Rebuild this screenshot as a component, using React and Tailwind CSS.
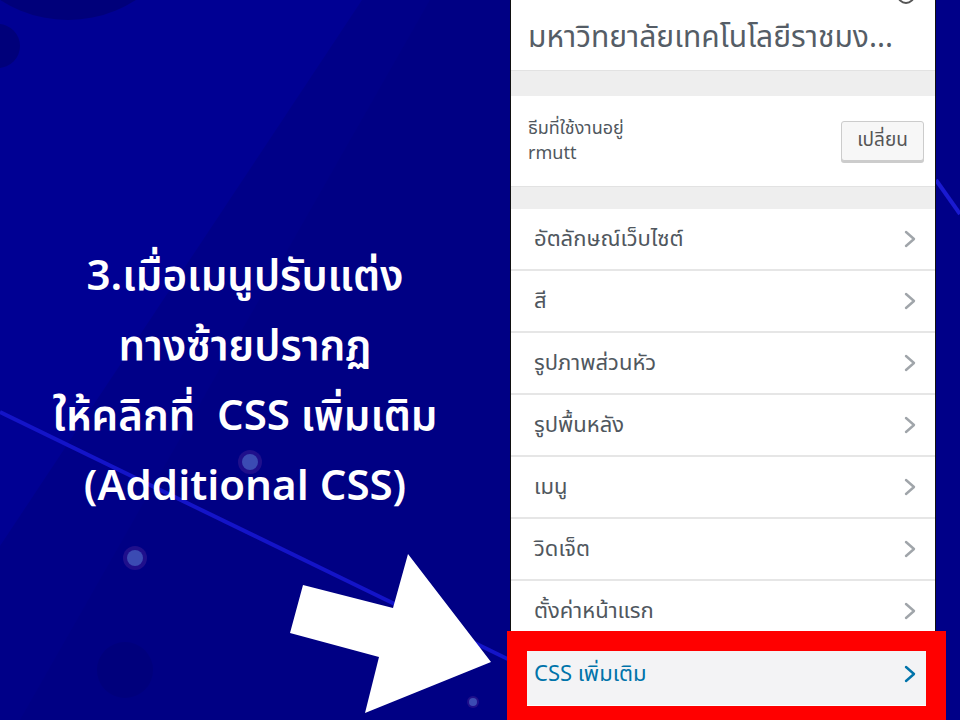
const rows = [
  'อัตลักษณ์เว็บไซต์',
  'สี',
  'รูปภาพส่วนหัว',
  'รูปพื้นหลัง',
  'เมนู',
  'วิดเจ็ต',
  'ตั้งค่าหน้าแรก',
]

const thai = { fontFamily: '"Noto Sans Thai", "Noto Sans", "DejaVu Sans", sans-serif' }

function Chevron({ color }) {
  return (
    <svg width="12" height="18" viewBox="0 0 12 18" fill="none">
      <polyline points="2,2 10,9 2,16" stroke={color} strokeWidth="2.4" strokeLinecap="round" strokeLinejoin="round" />
    </svg>
  )
}

function Backdrop() {
  return (
    <svg className="absolute inset-0" width="960" height="720" viewBox="0 0 960 720">
      <rect width="960" height="720" fill="#000088" />
      <polygon points="0,0 362,0 0,546" fill="#000093" />
      <polygon points="430,0 520,0 520,720 20,720" fill="#000084" />
      <circle cx="68" cy="-105" r="125" fill="#00007a" />
      <circle cx="-2" cy="46" r="22" fill="#00007a" />
      <circle cx="125" cy="670" r="28" fill="#00007c" />
      <line x1="0" y1="412" x2="520" y2="665" stroke="#1414c8" strokeWidth="4" />
      <line x1="936" y1="180" x2="960" y2="214" stroke="#1a1ad0" strokeWidth="4" />
      <circle cx="250" cy="462" r="12" fill="#5a2a9a" opacity="0.35" />
      <circle cx="250" cy="462" r="8" fill="#3b4bb3" />
      <circle cx="135" cy="558" r="12" fill="#5a2a9a" opacity="0.35" />
      <circle cx="135" cy="558" r="8" fill="#3b4bb3" />
      <circle cx="473" cy="702" r="6" fill="#5a2a9a" opacity="0.35" />
      <circle cx="473" cy="702" r="4" fill="#3b4bb3" />
    </svg>
  )
}

function Arrow() {
  return (
    <svg className="absolute left-0 top-0 pointer-events-none" width="520" height="720" viewBox="0 0 520 720">
      <polygon points="303,585 393,608 408,554 491,662 365,713 379,657 290,633" fill="#ffffff" />
    </svg>
  )
}

export default function App() {
  return (
    <div className="relative w-[960px] h-[720px] overflow-hidden bg-[#000088] flex" style={thai}>
      <Backdrop />

      <div className="relative z-10 w-[490px] flex flex-col items-center pt-[242px] text-white font-semibold text-[42px] leading-[70px]">
        <p>3.เมื่อเมนูปรับแต่ง</p>
        <p>ทางซ้ายปรากฏ</p>
        <p>ให้คลิกที่&nbsp; CSS เพิ่มเติม</p>
        <p>(Additional CSS)</p>
      </div>

      <div className="relative z-10 ml-[20px] w-[426px] h-[760px] bg-white border-x border-[#111] flex flex-col">
        <div className="relative -mt-[14px] px-[17px] pb-[13px]">
          <p className="text-[14px] leading-[18px] text-[#555]">ชื่อเว็บไซต์และไอคอน</p>
          <p className="mt-[15px] text-[30px] leading-[38px] text-[#555d66] whitespace-nowrap">มหาวิทยาลัยเทคโนโลยีราชมง...</p>
          <div className="absolute right-[20px] top-[0px] w-[18px] h-[18px] rounded-full border-2 border-[#555]" />
        </div>

        <div className="h-[26px] bg-[#eeeeee] border-t border-[#e2e2e2]" />

        <div className="h-[90px] px-[17px] flex items-center justify-between">
          <div className="text-[18px] leading-[25px] text-[#50575e]">
            <p>ธีมที่ใช้งานอยู่</p>
            <p>rmutt</p>
          </div>
          <button className="-mr-[6px] w-[83px] h-[40px] rounded-[3px] border border-[#cccccc] bg-[#f7f7f7] shadow-[0_2px_0_#cccccc] text-[19px] text-[#555]">
            เปลี่ยน
          </button>
        </div>

        <div className="h-[23px] bg-[#eeeeee] border-t border-[#e2e2e2]" />

        {rows.map((r) => (
          <div key={r} className="h-[62px] shrink-0 pl-[23px] pr-[19px] flex items-center justify-between border-b-2 border-[#e6e6e6] text-[22px] text-[#50575e]">
            <span>{r}</span>
            <Chevron color="#a0a5aa" />
          </div>
        ))}

        <div className="relative h-[62px] shrink-0 pl-[23px] pr-[19px] flex items-center justify-between bg-[#f3f3f5] text-[22px] text-[#0073aa]">
          <span>CSS เพิ่มเติม</span>
          <Chevron color="#0073aa" />
          <div className="absolute -left-[4px] -right-[11px] -top-[12px] -bottom-[21px] border-[20px] border-[#ff0000]" />
        </div>
      </div>

      <Arrow />
    </div>
  )
}
